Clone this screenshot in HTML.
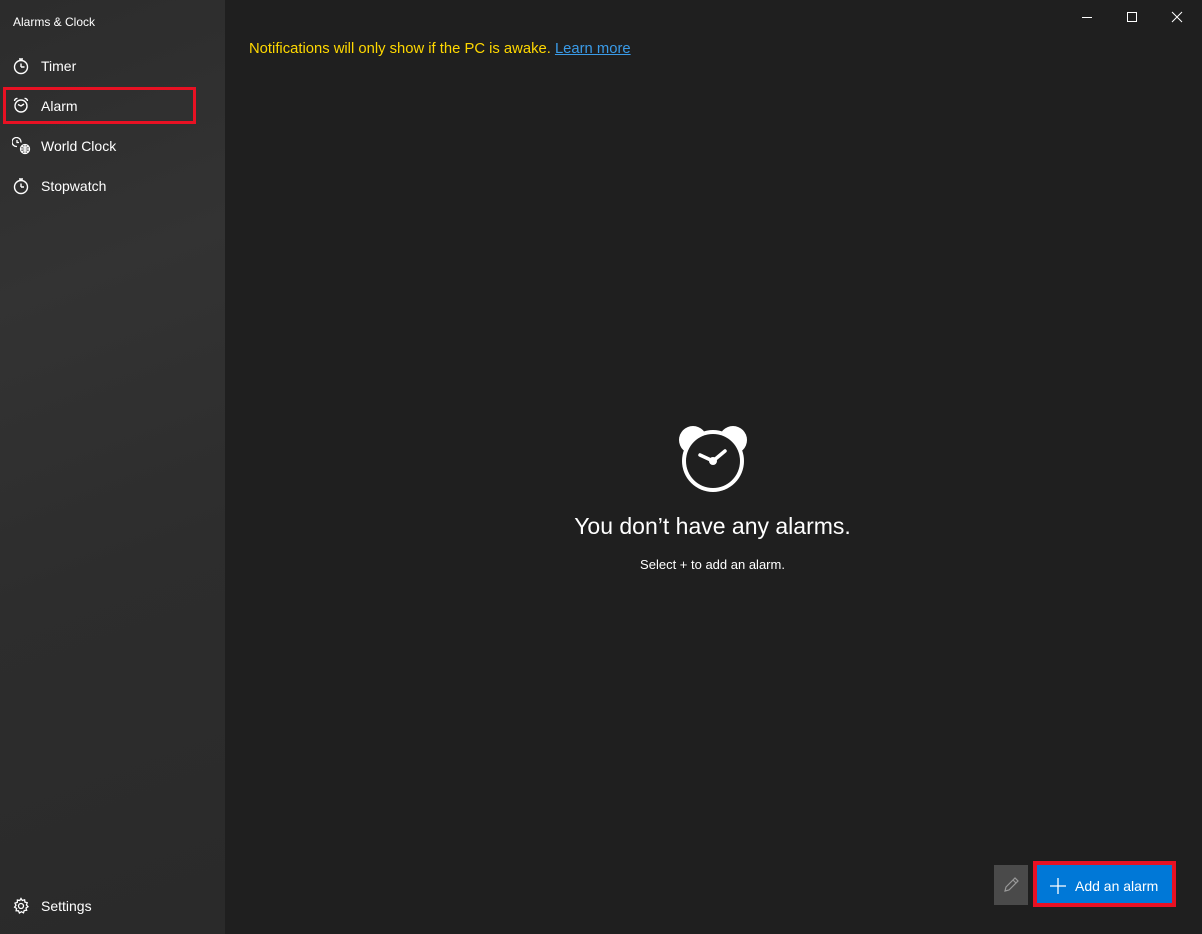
<!DOCTYPE html>
<html><head><meta charset="utf-8"><style>
*{margin:0;padding:0;box-sizing:border-box}
body{width:1202px;height:934px;background:#1f1f1f;font-family:"Segoe UI","Liberation Sans",sans-serif;color:#fff;position:relative;overflow:hidden}
#side{position:absolute;left:0;top:0;width:225px;height:934px;background:linear-gradient(160deg,#2c2c2c 0%,#333 30%,#2d2d2d 60%,#2a2a2a 100%)}
.t{position:absolute;font-size:14px;white-space:nowrap}
svg{position:absolute}
</style></head><body>
<div id="side">
<div class="t" style="left:13px;top:15px;font-size:12px">Alarms &amp; Clock</div>
<svg style="left:12px;top:57px" width="18" height="18" viewBox="0 0 18 18" fill="none" stroke="#fff" stroke-width="1.4"><circle cx="9" cy="10" r="6.5"/><path d="M7 2h4M9 2v2M9 10V6.5M9 10h3.5"/></svg>
<div class="t" style="left:41px;top:58px">Timer</div>
<div style="position:absolute;left:3px;top:87px;width:193px;height:37px;border:3px solid #e81123"></div>
<svg style="left:12px;top:96px" width="18" height="18" viewBox="0 0 18 18" fill="none" stroke="#fff" stroke-width="1.4"><circle cx="9" cy="10" r="6"/><path d="M2.5 5a2.5 2.5 0 0 1 3-2.5M15.5 5a2.5 2.5 0 0 0-3-2.5M6 8.5l3 1.5 3-2"/></svg>
<div class="t" style="left:41px;top:98px">Alarm</div>
<svg style="left:12px;top:137px" width="20" height="18" viewBox="0 0 20 18" fill="none" stroke="#fff" stroke-width="1.3"><path d="M9 5.5A4.5 4.5 0 1 0 5 9.5"/><path d="M5 3v2.5h2"/><circle cx="13" cy="12" r="4.5"/><path d="M8.5 12h9M13 7.5v9M10 9.5c2 1 4 1 6 0M10 14.5c2-1 4-1 6 0"/></svg>
<div class="t" style="left:41px;top:138px">World Clock</div>
<svg style="left:12px;top:177px" width="18" height="18" viewBox="0 0 18 18" fill="none" stroke="#fff" stroke-width="1.4"><circle cx="9" cy="10" r="6.5"/><path d="M7 2h4M9 2v2M9 10V6.5M9 10h3"/></svg>
<div class="t" style="left:41px;top:178px">Stopwatch</div>
<svg style="left:12px;top:897px" width="18" height="18" viewBox="0 0 18 18" fill="none" stroke="#fff" stroke-width="1.3"><circle cx="9" cy="9" r="2.5"/><path d="M9 1.5l1.3 2 2.3-.7.3 2.3 2.3.6-.8 2.3 1.6 1.7-2 1.3.6 2.3-2.4.2-.7 2.3-2.1-1.1-2 1.3-.9-2.2-2.4-.1.5-2.3-2-1.2 1.4-1.9-1-2.2 2.3-.7.1-2.4 2.4.5z"/></svg>
<div class="t" style="left:41px;top:898px">Settings</div>
</div>
<svg style="left:1080px;top:10px" width="110" height="16" viewBox="0 0 110 16" stroke="#fff" stroke-width="1" fill="none"><path d="M2 7.5h10"/><rect x="47.5" y="2.5" width="9" height="9"/><path d="M92 2l10 10M102 2l-10 10"/></svg>
<div class="t" style="left:249px;top:41px;color:#ffd800;font-size:14.8px">Notifications will only show if the PC is awake. <span style="color:#3a9be8;text-decoration:underline">Learn more</span></div>
<svg style="left:676px;top:422px" width="74" height="74" viewBox="0 0 74 74"><circle cx="17" cy="18" r="14" fill="#fff"/><circle cx="57" cy="18" r="14" fill="#fff"/><circle cx="37" cy="39" r="31" fill="#fff"/><circle cx="37" cy="39" r="27" fill="#1f1f1f"/><path d="M37 39L49 29M37 39L24 33" stroke="#fff" stroke-width="3.5" stroke-linecap="round"/><circle cx="37" cy="39" r="4" fill="#fff"/></svg>
<div class="t" style="left:0;width:1425px;text-align:center;top:513px;font-size:23px">You don’t have any alarms.</div>
<div class="t" style="left:0;width:1425px;text-align:center;top:557px;font-size:13px">Select + to add an alarm.</div>
<div style="position:absolute;left:994px;top:865px;width:34px;height:40px;background:#4a4a4a"></div>
<svg style="left:1002px;top:876px" width="18" height="18" viewBox="0 0 18 18" fill="none" stroke="#999" stroke-width="1.2"><path d="M3 15l1-4 9-9 3 3-9 9z M11 4l3 3"/></svg>
<div style="position:absolute;left:1033px;top:861px;width:143px;height:46px;border:4px solid #e81123;background:#0078d7"></div>
<svg style="left:1049px;top:877px" width="18" height="18" viewBox="0 0 18 18" stroke="#fff" stroke-width="1.3"><path d="M9 1v16M1 9h16"/></svg>
<div class="t" style="left:1075px;top:878px;font-size:14px">Add an alarm</div>
</body></html>
